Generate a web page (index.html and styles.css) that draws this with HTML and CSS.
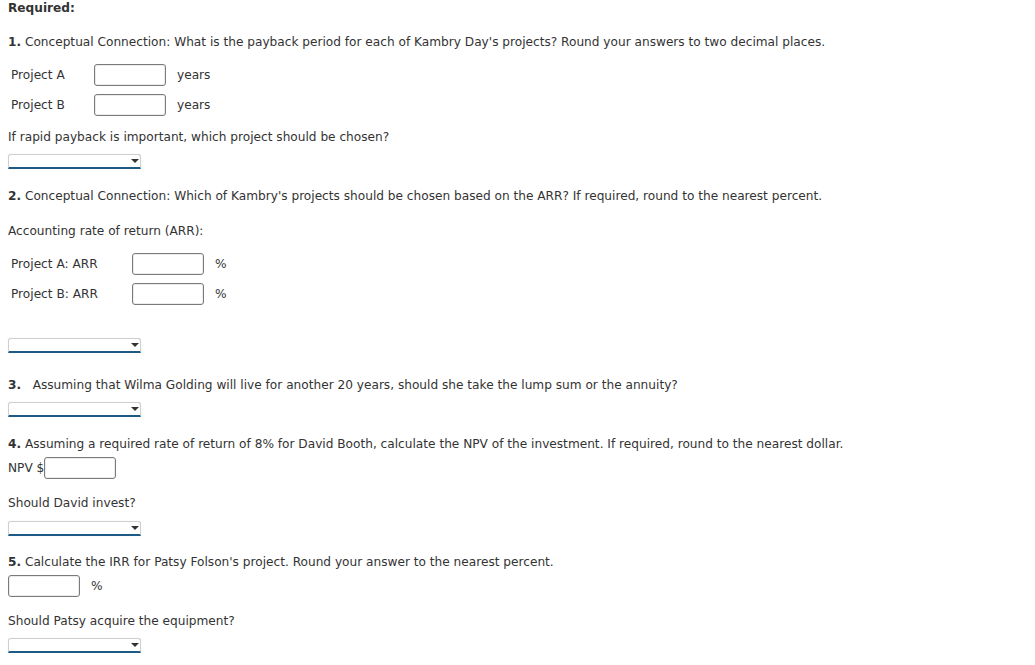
FILE: index.html
```html
<!DOCTYPE html>
<html lang="en">

<head>
    <meta charset="UTF-8">
    <meta name="viewport" content="width=device-width, initial-scale=1.0">
    <title>Required</title>
    <link rel="stylesheet" href="styles.css">
</head>

<body>
    <div class="page">
        <div class="req">Required:</div>

        <div class="q q1"><b>1.</b> Conceptual Connection: What is the payback period for each of Kambry Day's projects? Round your answers to two decimal places.</div>
        <div class="row row-first">
            <span class="label">Project A</span>
            <input class="box" type="text">
            <span class="unit">years</span>
        </div>
        <div class="row">
            <span class="label">Project B</span>
            <input class="box" type="text">
            <span class="unit">years</span>
        </div>
        <div class="q q-sub">If rapid payback is important, which project should be chosen?</div>
        <div class="pick"><select></select><span class="arrow"></span></div>

        <div class="q q-next"><b>2.</b> Conceptual Connection: Which of Kambry's projects should be chosen based on the ARR? If required, round to the nearest percent.</div>
        <div class="q q-next">Accounting rate of return (ARR):</div>
        <div class="row row-first">
            <span class="label wide">Project A: ARR</span>
            <input class="box" type="text">
            <span class="unit">%</span>
        </div>
        <div class="row">
            <span class="label wide">Project B: ARR</span>
            <input class="box" type="text">
            <span class="unit">%</span>
        </div>
        <div class="pick pick-far"><select></select><span class="arrow"></span></div>

        <div class="q q3"><b>3.</b>&nbsp;&nbsp; Assuming that Wilma Golding will live for another 20 years, should she take the lump sum or the annuity?</div>
        <div class="pick"><select></select><span class="arrow"></span></div>

        <div class="q q-next"><b>4.</b> Assuming a required rate of return of 8% for David Booth, calculate the NPV of the investment. If required, round to the nearest dollar.</div>
        <div class="row row-tight">
            <span>NPV $</span><input class="box" type="text">
        </div>
        <div class="q q-after">Should David invest?</div>
        <div class="pick pick-low"><select></select><span class="arrow"></span></div>

        <div class="q q5"><b>5.</b> Calculate the IRR for Patsy Folson's project. Round your answer to the nearest percent.</div>
        <div class="row row-tight">
            <input class="box" type="text">
            <span class="unit">%</span>
        </div>
        <div class="q q-after">Should Patsy acquire the equipment?</div>
        <div class="pick"><select></select><span class="arrow"></span></div>
    </div>
</body>

</html>
```

FILE: styles.css
```css
* {
    margin: 0;
    padding: 0;
    box-sizing: border-box;
}

body {
    background-color: #fff;
    color: #333;
    font-family: "DejaVu Sans", Verdana, sans-serif;
    font-size: 12.15px;
}

.page {
    padding: 1px 8px 0;
    display: flex;
    flex-direction: column;
    align-items: flex-start;
}

.req {
    font-weight: bold;
    line-height: 14px;
}

.q {
    line-height: 16px;
}

.q b {
    font-weight: bold;
}

.q1 {
    margin-top: 19px;
}

.q-sub {
    margin-top: 13px;
}

.q-next {
    margin-top: 19px;
}

.q3 {
    margin-top: 24px;
}

.q5 {
    margin-top: 18px;
}

.q-after {
    margin-top: 16px;
}

.row {
    display: flex;
    align-items: center;
    height: 22px;
    margin-top: 8px;
}

.row-first {
    margin-top: 14px;
}

.row-tight {
    margin-top: 5px;
}

.label {
    width: 86px;
    padding-left: 3px;
}

.label.wide {
    width: 124px;
}

.box {
    width: 72px;
    height: 22px;
    border: 1px solid #7a7a7a;
    border-radius: 3px;
    background-color: #fff;
    box-shadow: inset 0 0 0 1px #ececec;
    font: inherit;
}

.unit {
    margin-left: 11px;
}

.pick {
    position: relative;
    width: 133px;
    height: 15px;
    margin-top: 9px;
}

.pick-far {
    margin-top: 33px;
}

.pick-low {
    margin-top: 10px;
}

.pick select {
    appearance: none;
    -webkit-appearance: none;
    display: block;
    width: 100%;
    height: 100%;
    border: 1px solid #cfcfcf;
    border-bottom: 2px solid #1d5a86;
    border-radius: 3px 3px 0 0;
    background-color: #fff;
    box-shadow: 0 0 1px #ddd;
}

.arrow {
    position: absolute;
    right: 2px;
    top: 5px;
    width: 0;
    height: 0;
    border-left: 4px solid transparent;
    border-right: 4px solid transparent;
    border-top: 4px solid #333;
}
```
